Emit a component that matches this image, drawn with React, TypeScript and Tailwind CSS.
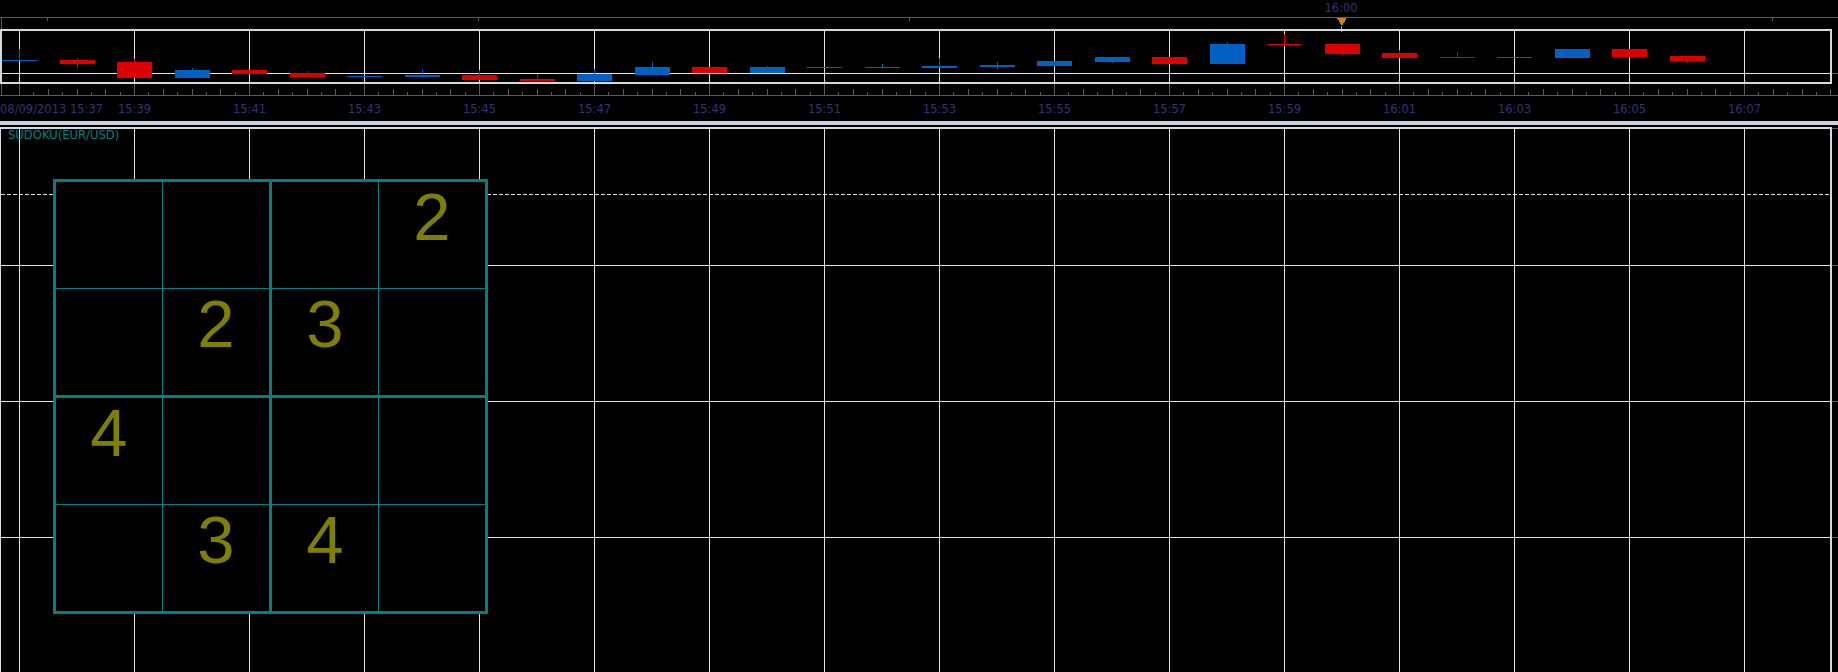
import React from "react";

type Candle = { c: "r" | "b"; o: number; cl: number; h?: number; l?: number };

const RED = "#dc0000";
const BLUE = "#0060c4";
const GRID = "#e4e4e4";
const FRAME = "#d3d9e3";
const AXIS = "#5a5a5a";
const LABEL = "#30337a";

// one bar per minute from 15:37, body top/bottom and wick ends in panel pixels
const candles: Candle[] = [
  { c: "b", o: 60, cl: 60, h: 49, l: 61 },
  { c: "r", o: 60, cl: 64, h: 58, l: 68 },
  { c: "r", o: 62, cl: 78, h: 59 },
  { c: "b", o: 70, cl: 78, h: 68 },
  { c: "r", o: 70, cl: 74 },
  { c: "r", o: 73, cl: 77, h: 71 },
  { c: "b", o: 76, cl: 76 },
  { c: "b", o: 75, cl: 77, h: 70 },
  { c: "r", o: 75, cl: 80, h: 70 },
  { c: "r", o: 79, cl: 81, h: 74 },
  { c: "b", o: 74, cl: 81, h: 69 },
  { c: "b", o: 67, cl: 75, h: 62 },
  { c: "r", o: 67, cl: 73 },
  { c: "b", o: 67, cl: 73, h: 66 },
  { c: "b", o: 67, cl: 67 },
  { c: "b", o: 67, cl: 67, h: 64 },
  { c: "b", o: 66, cl: 68, h: 58 },
  { c: "b", o: 65, cl: 67, h: 62, l: 69 },
  { c: "b", o: 61, cl: 66 },
  { c: "b", o: 57, cl: 62, l: 63 },
  { c: "r", o: 57, cl: 64 },
  { c: "b", o: 44, cl: 64, h: 42 },
  { c: "r", o: 44, cl: 44, h: 34, l: 46 },
  { c: "r", o: 44, cl: 54, l: 55 },
  { c: "r", o: 53, cl: 58, h: 50 },
  { c: "r", o: 57, cl: 57, h: 52 },
  { c: "b", o: 57, cl: 57 },
  { c: "b", o: 49, cl: 58 },
  { c: "r", o: 49, cl: 57 },
  { c: "r", o: 56, cl: 61, l: 63 },
];

const gridXs = Array.from({ length: 16 }, (_, j) => 19 + 115 * j);
const timeLabels = [
  "15:39", "15:41", "15:43", "15:45", "15:47", "15:49", "15:51", "15:53",
  "15:55", "15:57", "15:59", "16:01", "16:03", "16:05", "16:07",
];

function PriceChart() {
  const ticks = Array.from({ length: 128 }, (_, i) => i);
  return (
    <svg
      width={1838}
      height={121}
      className="block font-['DejaVu_Sans',sans-serif] text-[11.5px]"
      shapeRendering="crispEdges"
    >
      {/* period separator strip */}
      <line x1={0} y1={17.5} x2={1838} y2={17.5} stroke={AXIS} />
      {[47.5, 478.5, 909.5, 1772.5].map((x) => (
        <line key={x} x1={x} y1={17} x2={x} y2={21} stroke={AXIS} />
      ))}
      <line x1={1.5} y1={17} x2={1.5} y2={96} stroke={AXIS} />
      <text x={1341} y={12} fill={LABEL} textAnchor="middle" shapeRendering="auto">
        16:00
      </text>
      <polygon points="1337,18 1346.5,18 1342,26" fill="#d98300" />
      <line x1={1341.5} y1={26} x2={1341.5} y2={32} stroke="#9a9a9a" />

      {/* chart frame */}
      <rect x={1} y={30} width={1830} height={53} fill="none" stroke={FRAME} strokeWidth={2} />
      <line x1={1} y1={73.5} x2={1830} y2={73.5} stroke={GRID} />
      <line x1={1832} y1={73.5} x2={1838} y2={73.5} stroke={AXIS} />
      {gridXs.map((x) => (
        <line key={x} x1={x + 0.5} y1={31} x2={x + 0.5} y2={82} stroke={GRID} />
      ))}

      {/* candles */}
      {candles.map((k, i) => {
        const cx = Math.round(19 + 57.5 * i);
        const col = k.c === "r" ? RED : BLUE;
        const top = Math.min(k.o, k.cl);
        const bot = Math.max(k.o, k.cl);
        const hi = k.h ?? top;
        const lo = k.l ?? bot;
        return (
          <g key={i}>
            {(hi < top || lo > bot) && (
              <line x1={cx + 0.5} y1={hi} x2={cx + 0.5} y2={lo} stroke={col} />
            )}
            <rect x={cx - 17} y={top} width={35} height={Math.max(1, bot - top)} fill={col} />
          </g>
        );
      })}

      {/* time axis */}
      <line x1={0} y1={95.5} x2={1838} y2={95.5} stroke={AXIS} />
      {ticks.map((i) => {
        const x = Math.round(19 + 14.375 * i) + 0.5;
        if (x > 1838) return null;
        const y1 = i % 8 === 0 ? 84 : i % 2 === 0 ? 89 : 92;
        return <line key={i} x1={x} y1={y1} x2={x} y2={95} stroke={AXIS} />;
      })}
      <text x={0} y={113} fill={LABEL} shapeRendering="auto">
        08/09/2013 15:37
      </text>
      {timeLabels.map((t, j) => (
        <text key={t} x={gridXs[j + 1] + 0.5} y={113} fill={LABEL} textAnchor="middle" shapeRendering="auto">
          {t}
        </text>
      ))}
    </svg>
  );
}

function IndicatorGrid() {
  const rows = [138.5, 274.5, 410.5];
  return (
    <svg width={1838} height={545} className="absolute inset-0" shapeRendering="crispEdges">
      {gridXs.map((x) => (
        <line key={x} x1={x + 0.5} y1={2} x2={x + 0.5} y2={545} stroke={GRID} />
      ))}
      {rows.map((y) => (
        <g key={y}>
          <line x1={1} y1={y} x2={1830} y2={y} stroke={GRID} />
          <line x1={1832} y1={y} x2={1838} y2={y} stroke={AXIS} />
        </g>
      ))}
      <line x1={1} y1={67.5} x2={1830} y2={67.5} stroke={GRID} strokeDasharray="4 2" />
      <line x1={0.5} y1={0} x2={0.5} y2={545} stroke={FRAME} />
      <line x1={0} y1={1} x2={1832} y2={1} stroke={FRAME} strokeWidth={2} />
      <line x1={1831} y1={0} x2={1831} y2={545} stroke={FRAME} strokeWidth={2} />
      <line x1={1832} y1={1.5} x2={1838} y2={1.5} stroke={AXIS} />
    </svg>
  );
}

// 2x2 boxes of 2x2 cells, row-major inside each box
const boxes: (string | null)[][] = [
  [null, null, null, "2"],
  [null, "2", "3", null],
  ["4", null, null, "3"],
  [null, null, "4", null],
];

function Sudoku() {
  return (
    <div className="grid w-fit grid-cols-2 gap-[3px] bg-[#008080] p-[3px]">
      {boxes.map((box, b) => (
        <div key={b} className="grid grid-cols-2 gap-px">
          {box.map((v, c) => (
            <div
              key={c}
              className="flex h-[106px] w-[106px] justify-center bg-black pt-[2px] font-['Liberation_Sans',Arial,sans-serif] text-[67px] leading-[66px] text-[#808000]"
            >
              {v}
            </div>
          ))}
        </div>
      ))}
    </div>
  );
}

export default function App() {
  return (
    <div className="flex h-[672px] w-[1838px] flex-col overflow-hidden bg-black">
      <PriceChart />
      <div className="h-[4px] w-full bg-[#c9d1dc]" />
      <div className="h-[2px] w-full" />
      <div className="relative h-[545px] w-full">
        <IndicatorGrid />
        <div className="relative flex flex-col pl-[8px] pt-[2px]">
          <div className="font-['DejaVu_Sans',sans-serif] text-[11.6px] leading-[13px] text-[#008080]">
            SUDOKU(EUR/USD)
          </div>
          <div className="ml-[45px] mt-[37px]">
            <Sudoku />
          </div>
        </div>
      </div>
    </div>
  );
}
